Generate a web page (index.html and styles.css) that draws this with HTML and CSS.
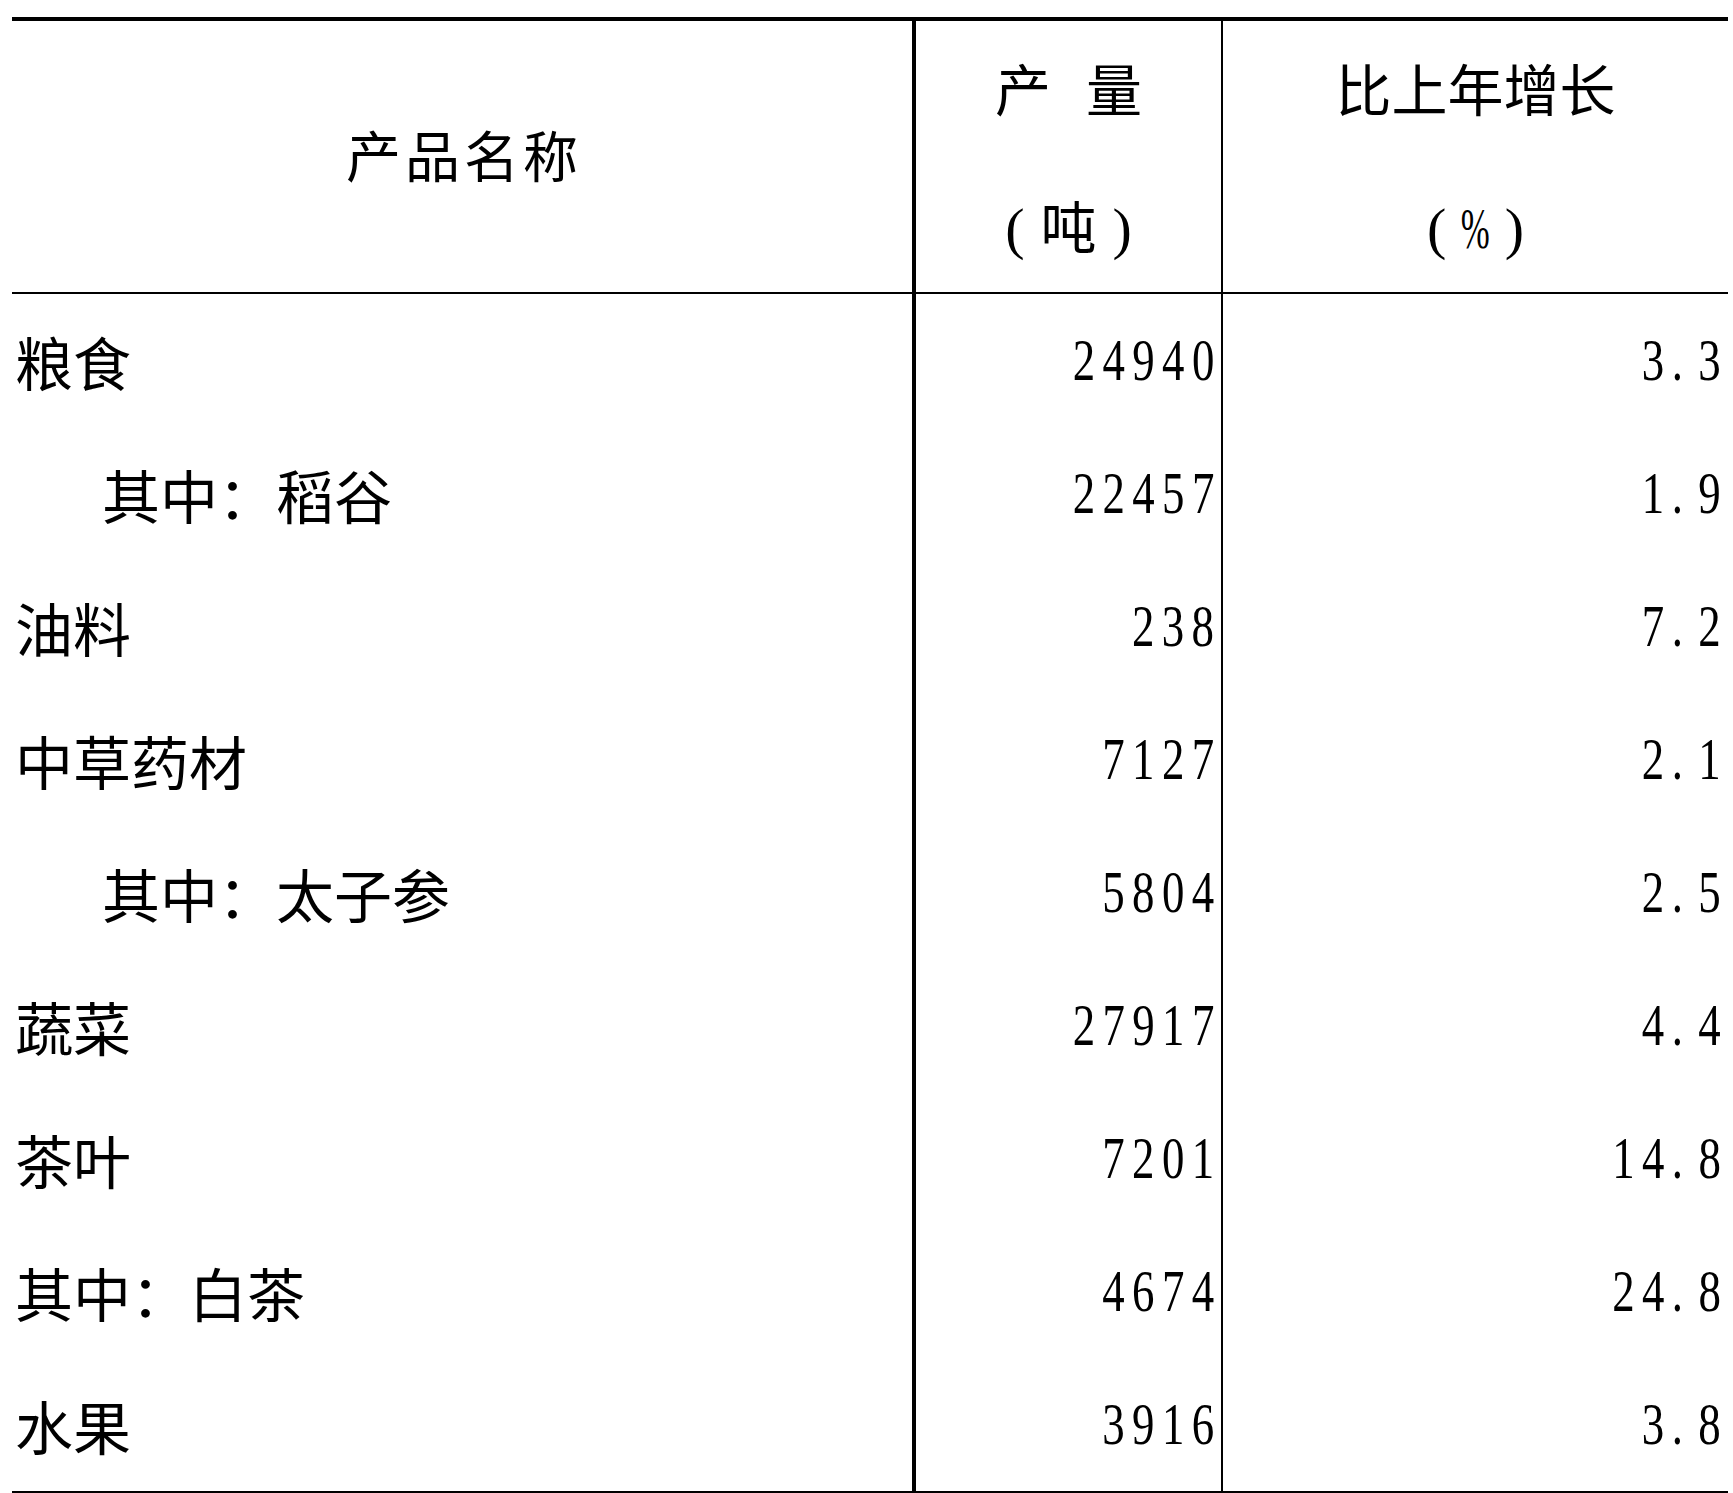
FILE: index.html
```html
<!DOCTYPE html>
<html lang="zh-CN">
<head>
<meta charset="utf-8">
<title>主要农产品产量</title>
<link rel="stylesheet" href="styles.css">
</head>
<body>
<div class="page">
  <div class="sheet">
    <div class="row head">
      <div class="cell c1 hcenter"><span class="hn">产品名称</span></div>
      <div class="cell c2 hstack">
        <div class="hl"><span class="wide">产量</span></div>
        <div class="hl"><span class="par">(</span>吨<span class="par">)</span></div>
      </div>
      <div class="cell c3 hstack">
        <div class="hl">比上年增长</div>
        <div class="hl"><span class="par">(</span><span class="pct">%</span><span class="par">)</span></div>
      </div>
    </div>
    <div class="row data">
      <div class="cell c1 name">粮食</div>
      <div class="cell c2 num"><span class="n">24940</span></div>
      <div class="cell c3 num"><span class="n">3. 3</span></div>
    </div>
    <div class="row data">
      <div class="cell c1 name sub">其中：稻谷</div>
      <div class="cell c2 num"><span class="n">22457</span></div>
      <div class="cell c3 num"><span class="n">1. 9</span></div>
    </div>
    <div class="row data">
      <div class="cell c1 name">油料</div>
      <div class="cell c2 num"><span class="n">238</span></div>
      <div class="cell c3 num"><span class="n">7. 2</span></div>
    </div>
    <div class="row data">
      <div class="cell c1 name">中草药材</div>
      <div class="cell c2 num"><span class="n">7127</span></div>
      <div class="cell c3 num"><span class="n">2. 1</span></div>
    </div>
    <div class="row data">
      <div class="cell c1 name sub">其中：太子参</div>
      <div class="cell c2 num"><span class="n">5804</span></div>
      <div class="cell c3 num"><span class="n">2. 5</span></div>
    </div>
    <div class="row data">
      <div class="cell c1 name">蔬菜</div>
      <div class="cell c2 num"><span class="n">27917</span></div>
      <div class="cell c3 num"><span class="n">4. 4</span></div>
    </div>
    <div class="row data">
      <div class="cell c1 name">茶叶</div>
      <div class="cell c2 num"><span class="n">7201</span></div>
      <div class="cell c3 num"><span class="n">14. 8</span></div>
    </div>
    <div class="row data">
      <div class="cell c1 name">其中：白茶</div>
      <div class="cell c2 num"><span class="n">4674</span></div>
      <div class="cell c3 num"><span class="n">24. 8</span></div>
    </div>
    <div class="row data">
      <div class="cell c1 name">水果</div>
      <div class="cell c2 num"><span class="n">3916</span></div>
      <div class="cell c3 num"><span class="n">3. 8</span></div>
    </div>
  </div>
</div>
</body>
</html>
```
FILE: styles.css
```css
html, body {
  margin: 0;
  padding: 0;
  background: #fff;
}

body {
  font-family: "Noto Sans CJK SC", "Noto Sans CJK TC", sans-serif;
  color: #000;
}

.page {
  padding: 17px 0 0 12px;
}

.sheet {
  width: 1716px;
  border-top: 4px solid #000;
  border-bottom: 2px solid #000;
}

.row {
  display: grid;
  grid-template-columns: 904px 307px 1fr;
}

.head {
  height: 271px;
  border-bottom: 2px solid #000;
}

.data {
  height: 133px;
}

.cell {
  box-sizing: border-box;
  display: flex;
  align-items: center;
  min-width: 0;
}

.c1 {
  border-right: 4px solid #000;
}

.c2 {
  border-right: 2px solid #000;
}

/* header */
.hcenter {
  justify-content: center;
  padding-bottom: 7px;
}

.hn {
  font-size: 55px;
  line-height: 1;
  letter-spacing: 4px;
  margin-right: -4px;
}

.hstack {
  flex-direction: column;
  align-items: center;
  justify-content: flex-start;
  padding-top: 36px;
  gap: 77px;
}

.hl {
  height: 60px;
  line-height: 60px;
  font-size: 56px;
  white-space: nowrap;
}

.wide {
  letter-spacing: 35px;
  margin-right: -35px;
}

.par {
  font-family: "Liberation Serif", serif;
  font-size: 58px;
  margin: 0 16px;
}

.pct {
  display: inline-block;
  font-family: "Liberation Serif", serif;
  font-size: 58px;
  transform: scaleX(0.6);
  margin: 0 -11px;
}

/* body rows */
.name {
  font-size: 58px;
  line-height: 1;
  padding-left: 3px;
  white-space: nowrap;
}

.name.sub {
  padding-left: 90px;
}

.num {
  justify-content: flex-end;
  font-family: "Liberation Serif", serif;
  font-size: 59px;
  line-height: 1.15;
  white-space: pre;
  padding-right: 7px;
}

.n {
  display: inline-block;
  letter-spacing: 9.7px;
  word-spacing: -14px;
  margin-right: -9.7px;
  transform: scaleX(0.76);
  transform-origin: calc(100% - 9.7px) 50%;
}
```
